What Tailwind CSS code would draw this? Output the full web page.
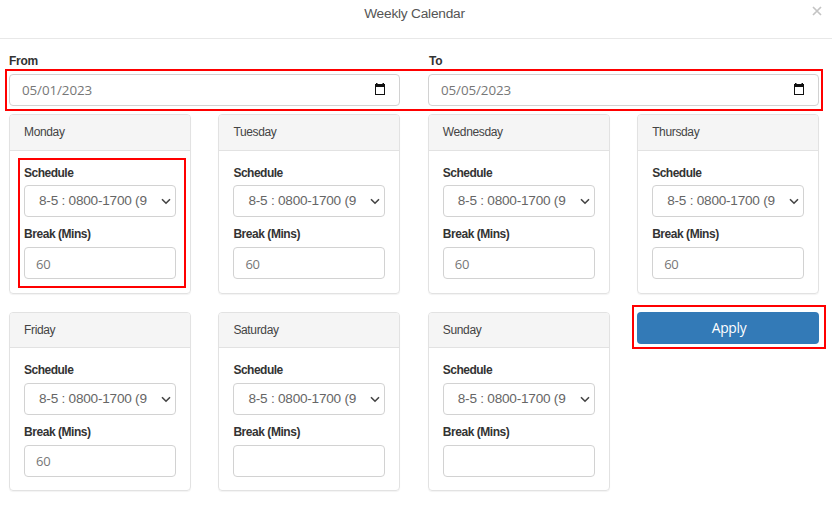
<!DOCTYPE html>
<html lang="en">
<head>
<meta charset="utf-8">
<title>Weekly Calendar</title>
<script src="https://cdn.jsdelivr.net/npm/@tailwindcss/browser@4"></script>
</head>
<body class="bg-white w-[832px] h-[516px] overflow-hidden font-['Liberation_Sans',Arial,sans-serif] text-[#333]">
<header class="relative h-[39px] border-b border-[#e8e8e8] text-center text-[13.7px] tracking-[-0.22px] leading-[28px] pr-[3px] text-[#555]">Weekly Calendar
  <button class="absolute right-[10px] top-[6px] w-[10px] h-[10px]" aria-label="Close"><svg class="block" width="10" height="10" viewBox="0 0 10 10" fill="none" stroke="#c4c4c4" stroke-width="1.7"><path d="M1 1l8 8M9 1l-8 8"/></svg></button>
</header>
<main class="pl-[9px] pr-[13px] pt-[13px]">
  <section class="relative grid grid-cols-2 gap-x-[28px]">
    <div>
      <label class="block h-[22px] leading-[18px] text-[12px] tracking-[-0.3px] font-bold">From</label>
      <div class="h-[32px] border border-[#d2d2d2] rounded-[4px] flex items-center justify-between pl-[12px] pr-[13px] pt-px font-['Open_Sans','Noto_Sans',sans-serif] text-[13.4px] tracking-[-0.1px] text-[#777]"><span>05/01/2023</span>
        <svg class="relative -top-px" width="12" height="13" viewBox="0 0 12 13"><path fill="#111" fill-rule="evenodd" d="M2 0h1.500v1h5V0H10v1h1v11H1V1H2zM2 4v7h8V4z"/></svg></div>
    </div>
    <div>
      <label class="block h-[22px] pl-px leading-[18px] text-[12px] tracking-[-0.3px] font-bold">To</label>
      <div class="h-[32px] border border-[#d2d2d2] rounded-[4px] flex items-center justify-between pl-[12px] pr-[13px] pt-px font-['Open_Sans','Noto_Sans',sans-serif] text-[13.4px] tracking-[-0.1px] text-[#777]"><span>05/05/2023</span>
        <svg class="relative -top-px" width="12" height="13" viewBox="0 0 12 13"><path fill="#111" fill-rule="evenodd" d="M2 0h1.500v1h5V0H10v1h1v11H1V1H2zM2 4v7h8V4z"/></svg></div>
    </div>
    <div class="absolute left-[-4px] top-[17px] w-[818px] h-[42px] border-2 border-[#ff0000]"></div>
  </section>
  <section class="grid grid-cols-4 gap-x-[27.5px] gap-y-[18px] mt-[8px]">
    <div id="apply" class="relative h-[32px]">
      <button class="block w-full h-[32px] pl-[2px] rounded-[4px] bg-[#337ab7] text-white font-['Open_Sans','Noto_Sans',sans-serif] text-[13.8px] tracking-[-0.3px]">Apply</button>
      <div class="absolute left-[-5px] top-[-7px] w-[194px] h-[44px] border-2 border-[#ff0000]"></div>
    </div>
  </section>
</main>
<script>
const days = [['Monday','60'],['Tuesday','60'],['Wednesday','60'],['Thursday','60'],['Friday','60'],['Saturday',''],['Sunday','']];
document.getElementById('apply').insertAdjacentHTML('beforebegin', days.map(([day, mins], i) => `
  <article class="relative ${i < 4 ? 'h-[180px]' : 'h-[179px]'} border border-[#e2e2e2] rounded-[4px] shadow-[0_1px_1px_rgba(0,0,0,0.05)]">
    <h2 class="${i < 4 ? 'h-[36px]' : 'h-[35px]'} rounded-t-[3px] bg-[#f5f5f5] border-b border-[#e2e2e2] pl-[14px] leading-[34px] text-[12px] tracking-[-0.35px] text-[#444]">${day}</h2>
    <div class="px-[14px] pt-[13px]">
      <label class="block ${i < 4 ? 'h-[21px]' : 'h-[22px]'} leading-[18px] text-[12px] tracking-[-0.5px] font-bold">Schedule</label>
      <div class="h-[32px] border border-[#d2d2d2] rounded-[4px] flex items-center justify-between pl-[14px] pr-[4px] text-[13.6px] tracking-[-0.23px] text-[#666]"><span class="whitespace-nowrap">8-5 : 0800-1700 (9</span>
        <svg width="10" height="7" viewBox="0 0 10 7" fill="none" stroke="#444" stroke-width="1.6"><path d="M1 1.200l4 4 4-4"/></svg></div>
      <label class="block h-[30px] pt-[8px] leading-[18px] text-[12px] tracking-[-0.45px] font-bold">Break (Mins)</label>
      <div class="h-[32px] border border-[#d2d2d2] rounded-[4px] flex items-center pl-[11px] ${i < 4 ? 'pt-[3px]' : 'pt-px'} font-['Open_Sans','Noto_Sans',sans-serif] text-[13px] tracking-[-0.3px] text-[#777]">${mins}</div>
    </div>
    ${i === 0 ? '<div class="absolute left-[8px] top-[43px] w-[168px] h-[130px] border-2 border-[#ff0000]"></div>' : ''}
  </article>`).join(''));
</script>
</body>
</html>
